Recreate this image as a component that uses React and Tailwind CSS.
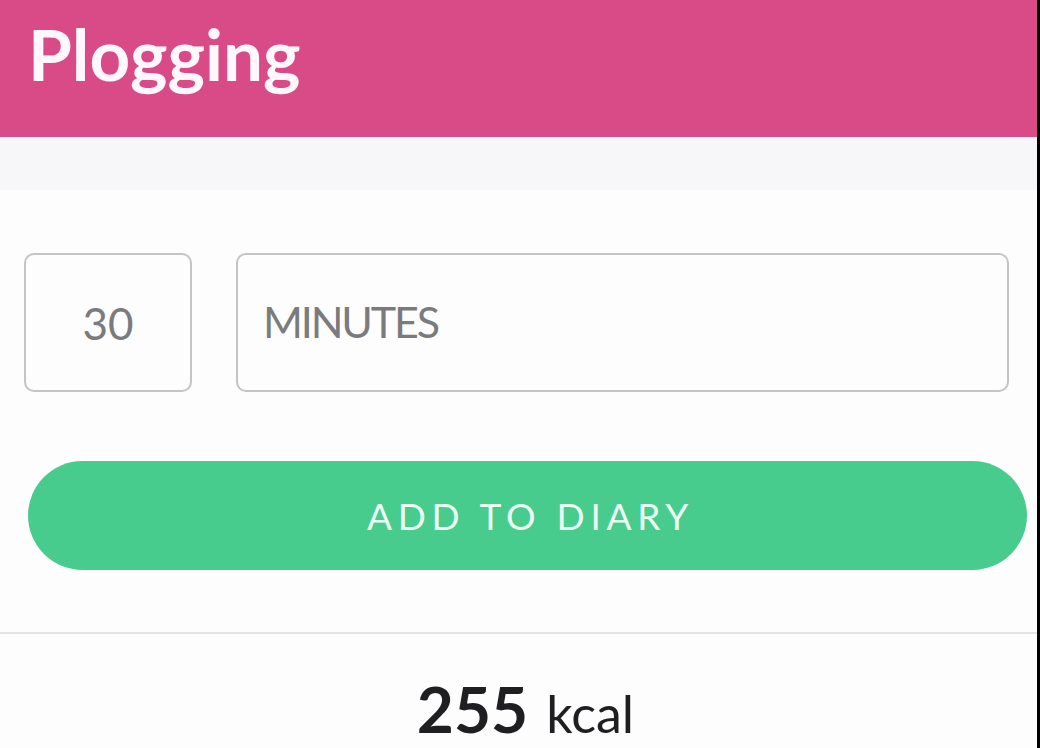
export default function App() {
  return (
    <div className="flex h-[748px] w-[1040px] overflow-hidden bg-black font-['Lato',sans-serif]">
      <div className="flex w-[1037px] shrink-0 flex-col bg-[#fdfdfe]">
        {/* header */}
        <header className="flex h-[137px] items-start bg-[#d84b87] px-[28px] pt-[15px]">
          <h1 className="text-[71px] font-bold leading-[1.1] text-[#fff7fb]">Plogging</h1>
        </header>

        {/* grey band */}
        <div className="h-[53px] bg-[#f7f6f9]" />

        {/* duration inputs */}
        <div className="flex gap-[44px] pl-[24px] pr-[28px] pt-[63px]">
          <div className="flex h-[139px] w-[168px] items-center justify-center rounded-[10px] border-2 border-[#c4c4c6]">
            <span className="text-[44px] text-[#7b7b7d]">30</span>
          </div>
          <div className="flex h-[139px] flex-1 items-center rounded-[10px] border-2 border-[#c4c4c6] pl-[25px]">
            <span className="text-[43px] tracking-[-0.05em] text-[#7b7b7d]">MINUTES</span>
          </div>
        </div>

        {/* add button */}
        <div className="pl-[28px] pr-[10px] pt-[69px]">
          <button className="flex h-[109px] w-full items-center justify-center rounded-full bg-[#47cc8e] pl-[6px] text-[37px] tracking-[0.155em] text-[#ecfff5]">
            ADD TO DIARY
          </button>
        </div>

        {/* divider */}
        <div className="mt-[62px] h-[2px] bg-[#e4e4e6]" />

        {/* result */}
        <div className="flex items-baseline justify-center gap-[18px] pl-[14px] pt-[43px]">
          <span className="text-[64px] font-bold leading-none text-[#1f1f22]">255</span>
          <span className="text-[52px] leading-none text-[#1f1f22]">kcal</span>
        </div>
      </div>
      <div className="w-[3px] shrink-0 bg-black" />
    </div>
  )
}
